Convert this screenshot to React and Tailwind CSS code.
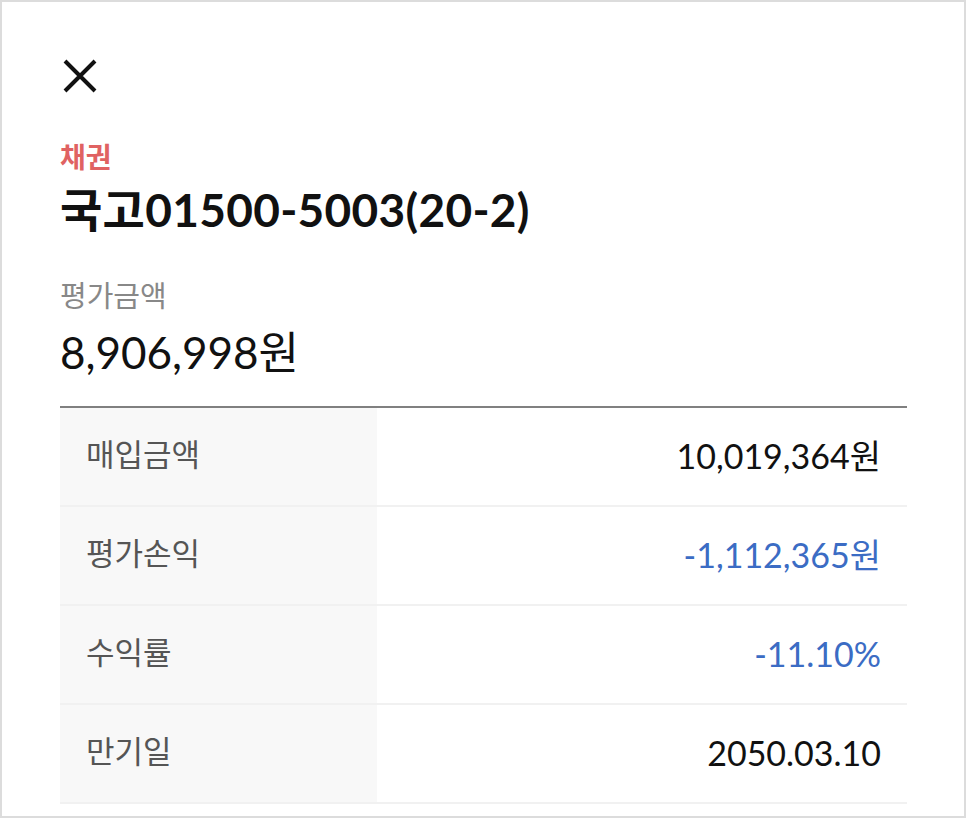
const ROWS = [
  { label: '매입금액', value: '10,019,364원', tone: 'text-[#111]' },
  { label: '평가손익', value: '-1,112,365원', tone: 'text-[#3b6cc4]' },
  { label: '수익률', value: '-11.10%', tone: 'text-[#3b6cc4]' },
  { label: '만기일', value: '2050.03.10', tone: 'text-[#111]' },
]

const FONT = "font-['Lato','Noto_Sans_CJK_KR',sans-serif]"

function CloseIcon() {
  return (
    <svg width="36" height="36" viewBox="0 0 36 36" fill="none" stroke="#111" strokeWidth="4" strokeLinecap="butt">
      <path d="M3 3 L33 33 M33 3 L3 33" />
    </svg>
  )
}

export default function App() {
  return (
    <div className={`w-[966px] h-[818px] bg-white border-2 border-[#dcdcdc] overflow-hidden ${FONT}`}>
      <div className="pl-[58px] pr-[57px] pt-[56px]">
        <button type="button" className="block ml-[2px]">
          <CloseIcon />
        </button>

        <p className="mt-[46px] text-[28px] leading-[34px] font-bold text-[#e06262]">채권</p>
        <h1 className="mt-[8px] text-[46px] leading-[56px] font-bold tracking-[0.3px] text-[#111]">국고01500-5003(20-2)</h1>

        <p className="mt-[40px] text-[29px] leading-[36px] text-[#888]">평가금액</p>
        <p className="mt-[10px] text-[44px] leading-[56px] text-[#111]">8,906,998원</p>

        <div className="mt-[26px] border-t-2 border-[#808080]">
          {ROWS.map((row) => (
            <div key={row.label} className="flex h-[99px] border-b-2 border-[#f1f1f1]">
              <div className="w-[317px] bg-[#f8f8f8] flex items-center pl-[26px] pb-[4px] text-[31px] text-[#555]">
                {row.label}
              </div>
              <div className={`flex-1 flex items-center justify-end pr-[26px] pb-[3px] text-[34px] ${row.tone}`}>
                {row.value}
              </div>
            </div>
          ))}
        </div>
      </div>
    </div>
  )
}
